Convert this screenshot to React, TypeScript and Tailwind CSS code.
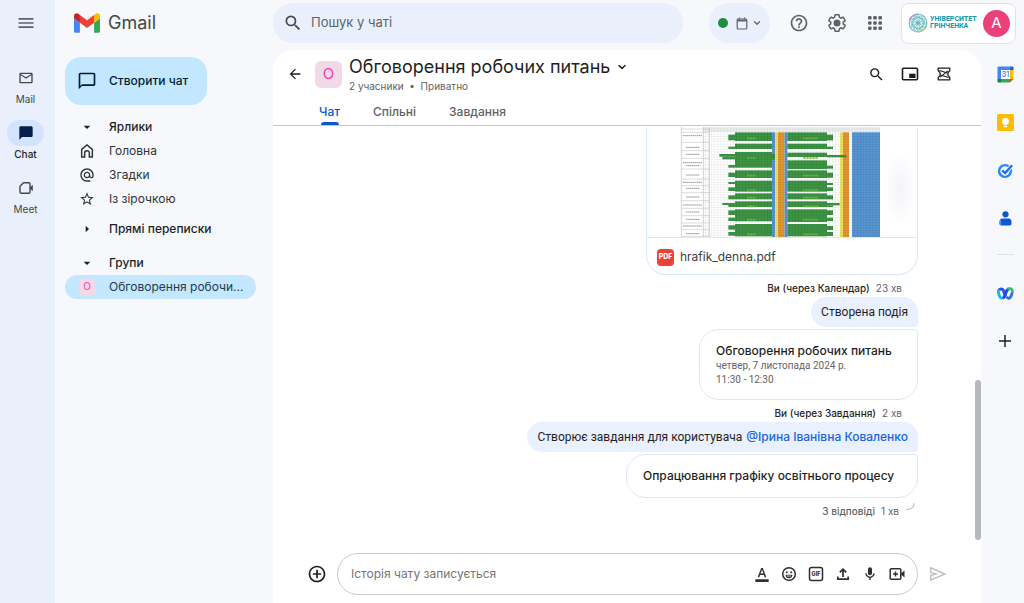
import type { ReactNode } from "react";
import {
  MdAddCircleOutline,
  MdAlternateEmail,
  MdArrowBack,
  MdArrowDropDown,
  MdArrowRight,
  MdChatBubble,
  MdChatBubbleOutline,
  MdFormatColorText,
  MdHelpOutline,
  MdMailOutline,
  MdMenu,
  MdOutlineMic,
  MdSearch,
  MdStarBorder,
} from "react-icons/md";
import { ChevronDown } from "lucide-react";

function GmailLogo() {
  return (
    <svg viewBox="52 42 88 66" className="h-5 w-[26px]" aria-hidden="true">
      <path fill="#4285f4" d="M58 108h14V74L52 59v43c0 3.32 2.69 6 6 6" />
      <path fill="#34a853" d="M120 108h14c3.32 0 6-2.69 6-6V59l-20 15" />
      <path fill="#fbbc04" d="M120 48v26l20-15v-8c0-7.42-8.47-11.65-14.4-7.2" />
      <path fill="#ea4335" d="M72 74V48l24 18 24-18v26L96 92" />
      <path fill="#c5221f" d="M52 51v8l20 15V48l-5.6-4.2c-5.94-4.45-14.4-.22-14.4 7.2" />
    </svg>
  );
}

function MeetIcon() {
  return (
    <svg viewBox="0 0 16 16" className="size-4" fill="none" stroke="currentColor" strokeWidth="1.400" aria-hidden="true">
      <path d="M5.500 2.700h5.300a1.200 1.200 0 0 1 1.200 1.200v8.200a1.200 1.200 0 0 1-1.200 1.200H3.200A1.200 1.200 0 0 1 2 12.100V6.200z" strokeLinejoin="round" />
      <path d="M12 7.600 14.800 4.800v6.400L12 8.400z" fill="currentColor" stroke="none" />
    </svg>
  );
}

function HomeIcon() {
  return (
    <svg viewBox="0 0 24 24" className="size-4" fill="none" stroke="currentColor" strokeWidth="2.200" aria-hidden="true">
      <path d="M4 21V9.500L12 3l8 6.500V21h-4.500v-6a3.500 3.500 0 0 0-7 0v6z" />
    </svg>
  );
}

function GearIcon() {
  return (
    <svg viewBox="0 0 24 24" className="size-5" fill="none" stroke="currentColor" strokeWidth="1.800" aria-hidden="true">
      <path d="M19.430 12.980c.04-.32.07-.64.07-.98 0-.34-.03-.66-.07-.98l2.110-1.650c.19-.15.24-.42.12-.64l-2-3.460a.5.5 0 0 0-.61-.22l-2.490 1c-.52-.4-1.080-.73-1.690-.98l-.38-2.650A.488.488 0 0 0 14 2h-4c-.25 0-.46.18-.49.42l-.38 2.650c-.61.25-1.170.59-1.690.98l-2.490-1a.5.5 0 0 0-.61.22l-2 3.460c-.13.22-.07.49.12.64l2.110 1.650c-.04.32-.07.65-.07.98s.03.66.07.98l-2.110 1.650c-.19.15-.24.42-.12.64l2 3.460c.12.22.39.3.61.22l2.490-1c.52.4 1.080.73 1.690.98l.38 2.650c.03.24.24.42.49.42h4c.25 0 .46-.18.49-.42l.38-2.650c.61-.25 1.170-.59 1.690-.98l2.490 1c.23.09.49 0 .61-.22l2-3.460c.12-.22.07-.49-.12-.64z" />
      <circle cx="12" cy="12" r="4.200" fill="currentColor" stroke="none" />
    </svg>
  );
}

function AppsIcon() {
  const stops = [2.8, 8, 13.2];
  return (
    <svg viewBox="0 0 16 16" className="size-4" fill="currentColor" aria-hidden="true">
      {stops.map((y) => stops.map((x) => <rect key={`${x}-${y}`} x={x - 1.8} y={y - 1.8} width="3.600" height="3.600" rx="1.200" />))}
    </svg>
  );
}

function CalendarSmallIcon() {
  return (
    <svg viewBox="0 0 12 13" className="h-[13px] w-3" fill="none" stroke="currentColor" strokeWidth="1.200" aria-hidden="true">
      <rect x="1.200" y="2" width="9.600" height="10" rx="1" />
      <path d="M1.200 3.600h9.600" strokeWidth="1.800" />
      <path d="M3.500.5v2M8.500.5v2" />
    </svg>
  );
}

function PipIcon() {
  return (
    <svg viewBox="0 0 18 14" className="h-[14px] w-[18px]" fill="none" stroke="currentColor" strokeWidth="1.600" aria-hidden="true">
      <rect x="1.500" y="1.200" width="15" height="11.600" rx="1" />
      <rect x="8.200" y="6.700" width="6.300" height="4.300" fill="currentColor" stroke="none" />
    </svg>
  );
}

function SummaryIcon() {
  return (
    <svg viewBox="0 0 14 14" className="size-[14px]" fill="none" stroke="currentColor" strokeWidth="1.300" strokeLinejoin="round" aria-hidden="true">
      <path d="M1.200 1.200h11.600v2.300C11.200 5 10.700 6 10.700 7s.5 2 2.100 3.500v2.300H1.200v-2.300C2.800 9 3.300 8 3.300 7s-.5-2-2.100-3.500z" />
      <path d="M2.500 3.500 10.500 6M3.500 8l8 2.500M10.800 3.800 3.200 10.200" strokeWidth="1.100" />
    </svg>
  );
}

function UniversityLogo() {
  const spokes = [0, 30, 60, 90, 120, 150];
  return (
    <svg viewBox="0 0 20 20" className="size-5 shrink-0" fill="none" aria-hidden="true">
      <circle cx="10" cy="10" r="8.800" stroke="#7cc5cb" strokeWidth="1.400" />
      <path d="M1.400 8a9 9 0 0 1 8.600-6.800" stroke="#b795cf" strokeWidth="1.600" />
      <path d="M18.600 12a9 9 0 0 1-8.600 6.800" stroke="#a9cf86" strokeWidth="1.600" />
      <circle cx="10" cy="10" r="5.800" stroke="#6fbfc6" strokeWidth="2.400" strokeDasharray="2 1" />
      {spokes.map((a) => (
        <path key={a} d="M10 2v16" stroke="#6cb9c6" strokeWidth=".8" transform={`rotate(${a} 10 10)`} />
      ))}
      <circle cx="10" cy="10" r="1.800" fill="#5fb9bf" />
    </svg>
  );
}

function CalendarLogo() {
  return (
    <svg viewBox="0 0 17 17" className="size-[17px]" aria-hidden="true">
      <path fill="#4285f4" d="M1.500.500h11V4H4v9H.500V1.500a1 1 0 0 1 1-1z" />
      <path fill="#1a66d6" d="M12.500.500h3a1 1 0 0 1 1 1V4h-4z" />
      <path fill="#fbbc04" d="M13 4h3.500v9H13z" />
      <path fill="#34a853" d="M4 13h9v3.500H4z" />
      <path fill="#188038" d="M.500 13H4v3.500H1.500a1 1 0 0 1-1-1z" />
      <path fill="#ea4335" d="M13 13h3.500L13 16.500z" />
      <path fill="#fff" d="M4 4h9v9H4z" />
      <text x="8.500" y="11.100" fontSize="7" fontWeight="600" fill="#4285f4" textAnchor="middle">31</text>
    </svg>
  );
}

function KeepLogo() {
  return (
    <svg viewBox="0 0 17 17" className="size-[17px]" aria-hidden="true">
      <rect width="17" height="17" rx="1.500" fill="#fbbc04" />
      <circle cx="8.500" cy="7.400" r="3.400" fill="#fff" />
      <path fill="#fff" d="M7 9h3v2.300H7zM7 12h3v1.300H7z" />
    </svg>
  );
}

function TasksLogo() {
  return (
    <svg viewBox="0 0 17 17" className="size-[17px]" fill="none" aria-hidden="true">
      <circle cx="8" cy="9" r="5.900" stroke="#2684fc" strokeWidth="2.400" />
      <path d="m5.300 8.300 2.800 2.800 6.800-7.600" stroke="#f6f8fc" strokeWidth="4" />
      <path d="m5.300 8.300 2.800 2.800 7-7.800" stroke="#1a73e8" strokeWidth="2.400" />
    </svg>
  );
}

function ContactsLogo() {
  return (
    <svg viewBox="0 0 17 17" className="size-[17px]" aria-hidden="true">
      <circle cx="8.500" cy="4.300" r="3.100" fill="#0b57d0" />
      <path d="M5.500 8.500h6c2 0 3 1.500 3 3.500v1.500c0 1-.7 2-2 2h-8c-1.300 0-2-1-2-2V12c0-2 1-3.500 3-3.500z" fill="#0b57d0" />
      <path d="M4 9.500c-1 .5-1.500 1.300-1.500 2.500v1.500c0 1 .7 2 2 2z" fill="#4a8df8" />
    </svg>
  );
}

function WebexLogo() {
  return (
    <svg viewBox="0 0 17 13" className="h-[13px] w-[17px]" fill="none" aria-hidden="true">
      <path d="M2 3.200c.8-1.600 3.400-1.700 4.500.3.700 1.200.8 3.800 2 6" stroke="#2457e6" strokeWidth="3" />
      <path d="M1.800 2.800c-.8 2 0 5 .9 6.700.9 1.600 2.300 2.100 3.600 1.200" stroke="#16b6ea" strokeWidth="2.800" />
      <path d="M6 11c1.800-.6 2.200-3 2.800-5 .6-2.100 1.300-3.500 3-4" stroke="#1d4fd8" strokeWidth="3" />
      <path d="M10.500 2.200c1.500-1 3.800-.8 4.500.6.500 1 .4 2 .2 3" stroke="#2bc46d" strokeWidth="2.800" />
      <path d="M15.200 5.500c-.4 2-1 3.800-2 5-1.200 1.200-2.800 1-3.700-.8" stroke="#2b6cf0" strokeWidth="2.800" />
    </svg>
  );
}

function EmojiIcon() {
  return (
    <svg viewBox="0 0 16 16" className="size-4" fill="none" stroke="currentColor" strokeWidth="1.500" aria-hidden="true">
      <circle cx="8" cy="8" r="6.300" />
      <path d="M4.600 8.800h6.800a3.400 3.400 0 0 1-6.800 0z" fill="currentColor" stroke="none" />
      <circle cx="5.800" cy="6.200" r="1" fill="currentColor" stroke="none" />
      <circle cx="10.200" cy="6.200" r="1" fill="currentColor" stroke="none" />
      <path d="M6 10h4" stroke="#fff" strokeWidth=".8" />
    </svg>
  );
}

function GifIcon() {
  return (
    <svg viewBox="0 0 16 16" className="size-4" fill="none" stroke="currentColor" strokeWidth="1.500" aria-hidden="true">
      <rect x="1.500" y="1.500" width="13" height="13" rx="2" />
      <text x="8" y="10" fontSize="5.500" fontWeight="800" fill="currentColor" stroke="none" textAnchor="middle">GIF</text>
    </svg>
  );
}

function UploadIcon() {
  return (
    <svg viewBox="0 0 16 16" className="size-4" fill="none" stroke="currentColor" strokeWidth="1.700" aria-hidden="true">
      <path d="M8 11V3.500M4.800 6.300 8 3.100l3.200 3.200M2.800 10.500v2.700h10.400v-2.700" />
    </svg>
  );
}

function VideoAddIcon() {
  return (
    <svg viewBox="0 0 16 16" className="size-4" fill="none" stroke="currentColor" strokeWidth="1.500" aria-hidden="true">
      <rect x="1.200" y="2.800" width="10.600" height="10.400" rx="1" />
      <path d="M6.500 5.500v5M4 8h5" />
      <path d="M12 7.500 15.500 4.500v7L12 8.500z" fill="currentColor" stroke="none" />
    </svg>
  );
}

function SendIcon() {
  return (
    <svg viewBox="0 0 18 16" className="h-4 w-[18px]" fill="none" stroke="currentColor" strokeWidth="1.500" aria-hidden="true">
      <path d="M1.800 1.800 15.800 8l-14 6.200V9.500L7 8 1.800 6.500z" />
    </svg>
  );
}

// Busy cells of the schedule: x, y, width, height.
const busy = [
  [285, 34, 111, 26], [265, 41, 20, 17], [285, 68, 111, 16], [265, 77, 20, 7],
  [285, 93, 111, 47], [238, 99, 47, 8], [247, 107, 38, 8], [265, 132, 20, 8], [396, 99, 9, 16],
  [285, 148, 111, 23], [265, 155, 20, 13], [285, 179, 111, 33], [265, 183, 20, 6], [265, 199, 20, 11],
  [285, 217, 111, 18], [265, 223, 20, 12], [285, 241, 111, 17], [247, 246, 38, 6], [265, 252, 20, 6],
  [285, 265, 111, 36], [265, 268, 20, 14], [265, 290, 20, 10], [285, 309, 111, 37], [265, 313, 20, 13], [265, 333, 20, 11],
  [442, 34, 119, 26], [561, 41, 18, 17], [442, 68, 119, 16], [561, 77, 18, 7],
  [442, 95, 119, 13], [561, 102, 58, 7], [442, 118, 119, 26], [561, 134, 18, 9],
  [442, 148, 119, 23], [561, 155, 18, 15], [442, 179, 119, 33], [561, 186, 18, 6], [561, 199, 18, 11],
  [442, 217, 119, 18], [561, 223, 18, 12], [442, 241, 119, 17], [561, 246, 38, 7], [561, 253, 18, 5],
  [442, 265, 119, 38], [561, 268, 18, 14], [561, 290, 18, 10], [442, 309, 119, 37], [561, 315, 18, 12], [561, 333, 18, 12],
];

const rowNames = [44, 79, 100, 125, 134, 162, 184, 202, 228, 252, 273, 295, 315, 338];
const rowLines = [24, 34, 64, 89, 112, 144, 174, 194, 215, 239, 262, 284, 306, 326, 346];
const marks = [52, 111, 164, 207, 230, 256, 296, 340];

function ScheduleSheet() {
  return (
    <svg viewBox="21 18 810 330" className="block h-auto w-full" role="img" aria-label="hrafik_denna.pdf">
      <defs>
        <pattern id="grid" width="9.300" height="7.600" patternUnits="userSpaceOnUse">
          <path d="M9.300 0H0v7.600" fill="none" stroke="#c3c7cb" strokeWidth="1.200" />
        </pattern>
        <pattern id="cells" width="9.300" height="7.600" patternUnits="userSpaceOnUse">
          <path d="M9.300 0H0v7.600" fill="none" stroke="#00000038" strokeWidth="1.400" />
        </pattern>
        <radialGradient id="smudge">
          <stop offset="0" stopColor="#f3f4fa" />
          <stop offset="1" stopColor="#ffffff" />
        </radialGradient>
      </defs>
      <rect x="21" y="18" width="810" height="330" fill="#fff" />
      <ellipse cx="780" cy="205" rx="50" ry="110" fill="url(#smudge)" />
      <rect x="190" y="18" width="530" height="330" fill="url(#grid)" />
      <rect x="190" y="18" width="530" height="14" fill="#9da3a833" />
      <path d="M124 18v330M190 18v330M208 18v330" stroke="#a7abb0" strokeWidth="1.500" />
      {rowLines.map((y) => (
        <path key={y} d={`M124 ${y}h84`} stroke="#b4b8bc" strokeWidth="1.500" />
      ))}
      {rowNames.map((y, i) => (
        <path key={y} d={`M${i % 3 ? 138 : 128} ${y}h${i % 3 ? 40 : 58}`} stroke="#96999d" strokeWidth="3" strokeDasharray="5 1" />
      ))}
      <path d="M396 34h9v314h-9zM433 34h9v314h-9zM636 34h84v314h-84z" fill="#5795d2" />
      <path d="M405 34h9v314h-9zM600 34h9v314h-9z" fill="#eee264" />
      <path d="M414 34h19v314h-19zM609 34h18v314h-18z" fill="#e59531" />
      {busy.map(([x, y, w, h]) => (
        <rect key={`${x}-${y}`} x={x} y={y} width={w} height={h} fill="#3d9444" />
      ))}
      {busy.map(([x, y, w, h]) => (
        <rect key={`${x}-${y}`} x={x} y={y} width={w} height={h} fill="url(#cells)" />
      ))}
      <path d="M396 34h46v314h-46zM600 34h27v314h-27zM636 34h84v314h-84z" fill="url(#cells)" />
      {marks.map((y) => (
        <path key={y} d={`M321 ${y}h28M490 ${y}h44`} stroke="#6fae3f" strokeWidth="5" strokeDasharray="7 2" />
      ))}
    </svg>
  );
}

function RailItem({ icon, label, active }: { icon: ReactNode; label: string; active?: boolean }) {
  return (
    <a href={`#${label}`} className={`flex flex-col items-center text-[10px] leading-4 ${active ? "font-medium text-[#1f1f1f]" : "text-[#444746]"}`}>
      <span className={`flex h-[26px] w-[37px] items-center justify-center rounded-full ${active ? "bg-[#d3e3fd] text-[#041e49]" : ""}`}>{icon}</span>
      {label}
    </a>
  );
}

function NavRow({ icon, label, bold }: { icon: ReactNode; label: string; bold?: boolean }) {
  return (
    <a href="#nav" className={`flex h-6 items-center text-xs ${bold ? "font-medium text-[#1f1f1f]" : "text-[#303234]"}`}>
      <span className="flex w-11 shrink-0 items-center justify-center">{icon}</span>
      {label}
    </a>
  );
}

function IconButton({ label, children, className = "" }: { label: string; children: ReactNode; className?: string }) {
  return (
    <button type="button" aria-label={label} className={`flex size-6 shrink-0 items-center justify-center ${className}`}>
      {children}
    </button>
  );
}

function Sender({ name, time }: { name: string; time: string }) {
  return (
    <p className="flex h-[22px] items-center gap-1.5 pt-1 pr-4 text-[10px] leading-4 text-[#5f6368]">
      <span className="font-medium text-[#1f1f1f]">{name}</span>
      {time}
    </p>
  );
}

export default function App() {
  return (
    <div className="flex h-screen overflow-hidden bg-[#f6f8fc] font-['Inter','Noto_Sans',sans-serif] text-[#1f1f1f]">
      <nav aria-label="Програми" className="flex w-[55px] shrink-0 flex-col items-center bg-[#e9f0fb] pr-1">
        <div className="flex h-[65px] pt-[11px]">
          <IconButton label="Меню" className="text-[#5f6368]">
            <MdMenu className="size-5" />
          </IconButton>
        </div>
        <div className="flex flex-col gap-[13px]">
          <RailItem icon={<MdMailOutline className="size-4" />} label="Mail" />
          <RailItem icon={<MdChatBubble className="size-4" />} label="Chat" active />
          <RailItem icon={<MeetIcon />} label="Meet" />
        </div>
      </nav>

      <aside className="flex w-[218px] shrink-0 flex-col pr-[17px] pl-2.5">
        <a href="#home" className="flex h-[46px] items-center gap-2 pl-[9px] text-lg text-[#444746]">
          <GmailLogo />
          Gmail
        </a>
        <button type="button" className="mt-[11px] flex h-12 w-[142px] items-center gap-3 rounded-2xl bg-[#c2e7ff] pl-3 text-xs font-medium text-[#001d35]">
          <MdChatBubbleOutline className="size-5" />
          Створити чат
        </button>
        <div className="mt-2.5">
          <NavRow bold icon={<MdArrowDropDown className="size-4" />} label="Ярлики" />
          <NavRow icon={<HomeIcon />} label="Головна" />
          <NavRow icon={<MdAlternateEmail className="size-4" />} label="Згадки" />
          <NavRow icon={<MdStarBorder className="size-4" />} label="Із зірочкою" />
        </div>
        <div className="mt-1.5">
          <NavRow bold icon={<MdArrowRight className="size-4" />} label="Прямі переписки" />
        </div>
        <div className="mt-2.5">
          <NavRow bold icon={<MdArrowDropDown className="size-4" />} label="Групи" />
          <a href="#room" className="flex h-6 items-center rounded-full bg-[#c2e7ff] text-xs text-[#1f3a4f]">
            <span className="flex w-11 shrink-0 justify-center">
              <span className="flex size-[17px] items-center justify-center rounded-sm bg-[#f1d9e8] text-[10px] font-medium text-[#f45bbd]">О</span>
            </span>
            <span className="whitespace-nowrap">Обговорення робочи...</span>
          </a>
        </div>
      </aside>

      <div className="flex min-w-0 flex-1 flex-col">
        <header className="flex h-[50px] shrink-0 items-start pt-[3px] pr-2">
          <label className="flex h-10 max-w-[410px] min-w-0 flex-1 items-center gap-2 rounded-full bg-[#e9f0fb] px-2.5">
            <MdSearch className="size-5 shrink-0 text-[#444746]" />
            <input type="search" aria-label="Пошук у чаті" placeholder="Пошук у чаті" className="min-w-0 flex-1 bg-transparent text-[13px] outline-none placeholder:text-[#5f6368]" />
          </label>
          <div className="ml-auto flex h-10 items-center pl-6 text-[#5f6368]">
            <button type="button" aria-label="Статус" className="flex h-10 w-[61px] items-center justify-center gap-1 rounded-full bg-[#e9f0fb]">
              <span className="mr-1 size-2.5 rounded-full bg-[#1e8e3e]" />
              <CalendarSmallIcon />
              <ChevronDown className="size-2.5" strokeWidth={3} />
            </button>
            <div className="ml-[17px] flex gap-3.5">
              <IconButton label="Довідка"><MdHelpOutline className="size-5" /></IconButton>
              <IconButton label="Налаштування"><GearIcon /></IconButton>
              <IconButton label="Додатки Google"><AppsIcon /></IconButton>
            </div>
            <button type="button" aria-label="Обліковий запис" className="ml-3.5 flex h-[41px] w-[115px] items-center gap-0.5 rounded-lg border border-[#dfe2e8] bg-white pl-1.5 text-left">
              <UniversityLogo />
              <span className="font-['Roboto',sans-serif] text-[7px] leading-[7px] font-extrabold text-[#149cab]">УНІВЕРСИТЕТ<br />ГРІНЧЕНКА</span>
              <span className="mr-[5px] ml-auto flex size-[27px] shrink-0 items-center justify-center rounded-full bg-[#ec407a] text-[15px] text-white">А</span>
            </button>
          </div>
        </header>

        <div className="flex min-h-0 flex-1">
          <main className="relative flex min-w-0 flex-1 flex-col rounded-t-[20px] bg-white">
            <div className="shrink-0 border-b border-[#c4c7c5]">
              <div className="flex h-12 items-center pr-[25px] pl-2.5">
                <IconButton label="Назад"><MdArrowBack className="size-4" /></IconButton>
                <span className="ml-2 flex size-[27px] shrink-0 items-center justify-center rounded-md bg-[#f1d9e8] text-[15px] text-[#f23fb0]">О</span>
                <div className="ml-[7px] min-w-0 flex-1 pt-0.5">
                  <h1 className="flex items-center gap-1.5 text-lg leading-[22px]">
                    Обговорення робочих питань
                    <ChevronDown className="size-3" strokeWidth={3} />
                  </h1>
                  <p className="text-[10px] leading-4 text-[#5f6368]">2 учасники&nbsp; •&nbsp; Приватно</p>
                </div>
                <div className="flex gap-2.5">
                  <IconButton label="Пошук"><MdSearch className="size-[17px]" /></IconButton>
                  <IconButton label="Картинка в картинці"><PipIcon /></IconButton>
                  <IconButton label="Підсумок"><SummaryIcon /></IconButton>
                </div>
              </div>
              <div role="tablist" className="flex h-[27px] gap-[33px] pl-[46px] text-xs font-medium text-[#5f6368]">
                <button type="button" role="tab" aria-selected="true" className="flex flex-col items-center justify-between pt-1.5 text-[#0b57d0]">
                  Чат
                  <span className="h-[3px] w-[18px] rounded-t bg-[#0b57d0]" />
                </button>
                <button type="button" role="tab" aria-selected="false" className="flex pt-1.5">Спільні</button>
                <button type="button" role="tab" aria-selected="false" className="flex pt-1.5">Завдання</button>
              </div>
            </div>

            <section aria-label="Повідомлення" className="flex min-h-0 flex-1 flex-col items-end justify-end overflow-hidden pr-[63px] pb-3.5 text-xs">
              <a href="#file" className="w-[272px] shrink-0 rounded-b-[20px] border-x border-b border-[#dce7fc]">
                <ScheduleSheet />
                <span className="flex h-[37px] items-center gap-1.5 border-t border-[#dfe6f3] px-2.5 pt-0.5 text-[#3c4043]">
                  <span className="flex size-[17px] items-center justify-center rounded-sm bg-[#ea4335] text-[7px] font-extrabold text-white">PDF</span>
                  hrafik_denna.pdf
                </span>
              </a>
              <Sender name="Ви (через Календар)" time="23 хв" />
              <p className="flex h-[30px] shrink-0 items-center rounded-2xl rounded-br-sm bg-[#e9f0fe] px-2.5 font-['Roboto',sans-serif]">Створена подія</p>
              <article className="mt-0.5 h-[71px] w-[219px] shrink-0 rounded-[20px] rounded-tr-sm border border-[#dce7fc] px-4 pt-[13px]">
                <h2 className="leading-4 font-medium">Обговорення робочих питань</h2>
                <p className="font-['Roboto',sans-serif] text-[10px] leading-[14px] text-[#5f6368]">четвер, 7 листопада 2024 р.<br />11:30 - 12:30</p>
              </article>
              <Sender name="Ви (через Завдання)" time="2 хв" />
              <p className="flex h-[30px] shrink-0 items-center gap-1 rounded-2xl rounded-br-sm bg-[#e9f0fe] px-2.5 font-['Roboto',sans-serif]">
                Створює завдання для користувача
                <a href="#user" className="font-['Inter',sans-serif] font-medium text-[#1a66d8]">@Ірина Іванівна Коваленко</a>
              </p>
              <article className="mt-0.5 flex h-11 w-[292px] shrink-0 items-center rounded-[20px] rounded-tr-sm border border-[#dce7fc] px-4">
                <h2 className="font-medium whitespace-nowrap">Опрацювання графіку освітнього процесу</h2>
              </article>
              <div className="flex h-7 shrink-0 items-center gap-1.5 pr-[3px] text-[10px] text-[#5f6368]">
                <a href="#replies" className="font-medium">3 відповіді</a>
                <span>1 хв</span>
                <svg viewBox="0 0 10 12" className="h-3 w-2.5 self-start" fill="none" aria-hidden="true">
                  <path d="M9 5c0 4-3 6.500-8 6.500" stroke="#c4c7c5" strokeWidth="1.200" />
                </svg>
              </div>
            </section>
            <span className="absolute right-0 bottom-[63px] h-[160px] w-1.5 rounded-full bg-[#b5b7ba]" />

            <form className="flex h-[63px] shrink-0 items-center gap-2 pt-[13px] pr-[31px] pb-2 pl-8" onSubmit={(e) => e.preventDefault()}>
              <IconButton label="Додати"><MdAddCircleOutline className="size-5" /></IconButton>
              <div className="flex h-[42px] min-w-0 flex-1 items-center rounded-full border border-[#c9cbce] pr-2 pl-[13px]">
                <input type="text" aria-label="Повідомлення" placeholder="Історія чату записується" className="min-w-0 flex-1 bg-transparent text-xs outline-none placeholder:text-[#747775]" />
                <div className="flex gap-[3px] text-[#2d2f31]">
                  <IconButton label="Форматування"><MdFormatColorText className="size-4" /></IconButton>
                  <IconButton label="Емодзі"><EmojiIcon /></IconButton>
                  <IconButton label="GIF"><GifIcon /></IconButton>
                  <IconButton label="Завантажити файл"><UploadIcon /></IconButton>
                  <IconButton label="Голосове повідомлення"><MdOutlineMic className="size-4" /></IconButton>
                  <IconButton label="Додати відеозустріч"><VideoAddIcon /></IconButton>
                </div>
              </div>
              <IconButton label="Надіслати" className="text-[#bdc1c6]"><SendIcon /></IconButton>
            </form>
          </main>

          <aside aria-label="Бічна панель" className="flex w-[43px] shrink-0 flex-col items-center gap-6 pt-3 pl-[5px]">
            <IconButton label="Календар"><CalendarLogo /></IconButton>
            <IconButton label="Keep"><KeepLogo /></IconButton>
            <IconButton label="Завдання"><TasksLogo /></IconButton>
            <IconButton label="Контакти"><ContactsLogo /></IconButton>
            <span className="mb-0.5 h-px w-[17px] bg-[#dfe1e5]" />
            <IconButton label="Webex"><WebexLogo /></IconButton>
            <IconButton label="Установити доповнення">
              <svg viewBox="0 0 12 12" className="size-3" stroke="#1f1f1f" strokeWidth="1.500" aria-hidden="true">
                <path d="M6 0v12M0 6h12" />
              </svg>
            </IconButton>
          </aside>
        </div>
      </div>
    </div>
  );
}
